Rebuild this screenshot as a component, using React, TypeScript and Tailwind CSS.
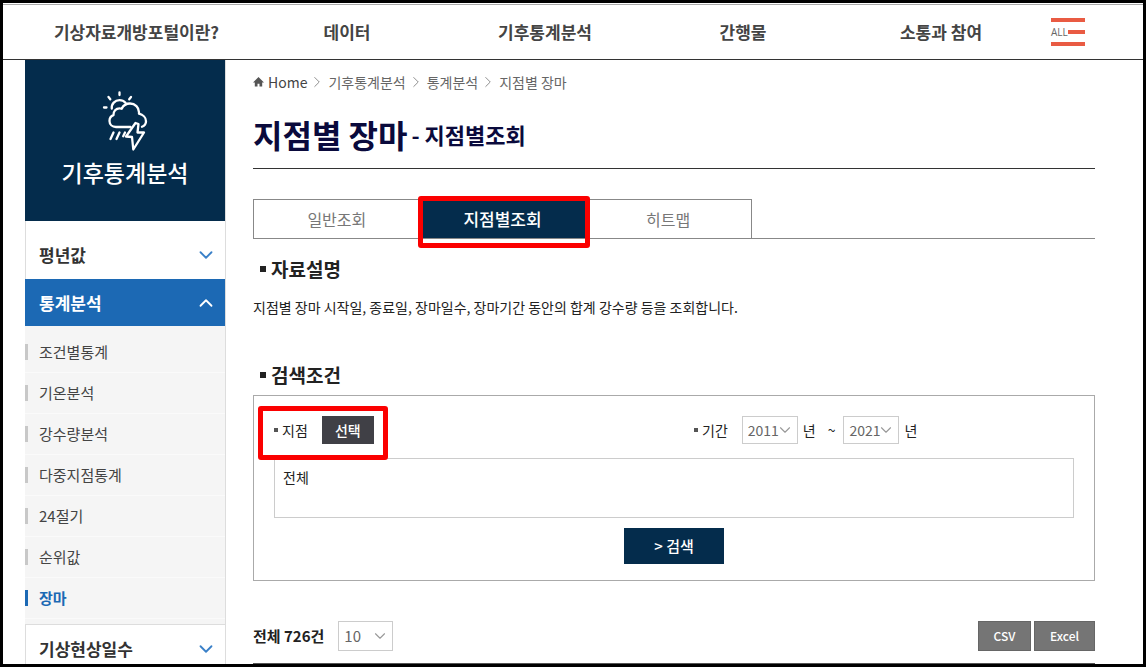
import React, { useState } from 'react';
import { ChevronDown, ChevronRight, ChevronUp } from 'lucide-react';

const NAV_ITEMS = ['기상자료개방포털이란?', '데이터', '기후통계분석', '간행물', '소통과 참여'];
const SUB_ITEMS = ['조건별통계', '기온분석', '강수량분석', '다중지점통계', '24절기', '순위값', '장마'];
const CRUMBS = ['기후통계분석', '통계분석', '지점별 장마'];
const TABS = ['일반조회', '지점별조회', '히트맵'];

const WeatherIcon: React.FC = () => (
  <svg width="46" height="61" viewBox="0 0 46 61" fill="none" stroke="white" strokeWidth="2.3" strokeLinecap="round" strokeLinejoin="round">
    <path d="M17.500 1.500v2.500M6.500 6l1.800 2.300M29 6l-1.800 2.300M2 16.500h2.500" />
    <path d="M9.800 17.500c-.6-4.500 3.200-8.300 7.700-8.300 2.500 0 4.600 1 6 2.600" />
    <path d="M28.500 36H14c-3.800 0-6.500-2.600-6.500-6 0-2.800 1.500-5 4-5.800-.3-4.200 2.600-6.900 6-6.900.8 0 1.500.1 2.200.4 1.500-3.200 4.700-5.200 8.300-5.200 5.200 0 9 4 9 8.800v1.400c4 .9 7 3.900 7 7.500 0 2.600-1.600 4.600-4 5.600" />
    <path d="M33.500 32L24 45.500l6 .5 1.300 12.500L42 41.500h-6.500L36.500 33z" />
    <path d="M11.500 41.500l-3 6.500M17.500 41.500l-3 6.500M23 41.500l-1.800 3.800" />
  </svg>
);

const HomeIcon: React.FC = () => (
  <svg width="11" height="10" viewBox="0 0 11 10" fill="#555">
    <path d="M5.500 0L0 5.500h1.800V9.500h2.700V6.800h2v2.700h2.700V5.500H11z" />
  </svg>
);

type SelectProps = React.SelectHTMLAttributes<HTMLSelectElement> & { options: string[] };

const SelectBox: React.FC<SelectProps> = ({ options, className = '', ...rest }) => (
  <div className="relative">
    <select {...rest} className={`block appearance-none border border-[#ccc] bg-white pl-[5px] text-[#666] ${className}`}>
      {options.map((o) => <option key={o} value={o}>{o}</option>)}
    </select>
    <ChevronDown size={18} strokeWidth={1.5} className="pointer-events-none absolute top-1/2 right-1 -translate-y-1/2 text-[#999]" />
  </div>
);

const SectionTitle: React.FC<{ children: React.ReactNode }> = ({ children }) => (
  <h3 className="flex items-center gap-[5px] pl-[7px] text-[19px] leading-7 font-bold text-[#222]">
    <span className="h-1.5 w-1.5 bg-[#222]" />
    {children}
  </h3>
);

const App: React.FC = () => {
  const [tab, setTab] = useState('지점별조회');
  const [stations, setStations] = useState('전체');

  return (
    <div className="h-screen overflow-hidden border-[3px] border-black bg-white pt-px font-['Noto_Sans_CJK_KR',sans-serif] text-[#222]">
      <header className="border-t border-b border-t-[#aaa] border-b-[#333] pr-12 pl-[22px]">
        <nav className="flex h-[54px] items-center">
          <ul className="grid flex-1 grid-cols-[223px_repeat(4,1fr)] text-center text-[17px] leading-6 font-bold text-[#444]">
            {NAV_ITEMS.map((item) => (
              <li key={item}><a href="#">{item}</a></li>
            ))}
          </ul>
          <button aria-label="전체메뉴" className="ml-[11px] flex h-7 w-[44px] flex-col justify-between pr-[10px]">
            <span className="h-1 w-full bg-[#e95b43]" />
            <span className="flex h-1 w-full items-center justify-between">
              <span className="font-['Open_Sans',sans-serif] text-[10px] leading-none text-[#666]">ALL</span>
              <span className="h-1 w-[17px] bg-[#e95b43]" />
            </span>
            <span className="h-1 w-full bg-[#e95b43]" />
          </button>
        </nav>
      </header>

      <div className="flex items-start gap-[27px] pr-12 pl-[22px]">
        <aside className="w-[201px] shrink-0 border-r border-[#ddd]">
          <div className="flex h-[161px] flex-col items-center bg-[#042c4c] pt-[31px] text-white">
            <WeatherIcon />
            <h2 className="mt-1 text-[23px] leading-8 font-medium">기후통계분석</h2>
          </div>
          <a href="#" className="flex h-[58px] items-center justify-between border-l border-[#ddd] pt-[10px] pr-2 pl-[13px] text-[17px] font-bold text-[#333]">
            평년값
            <ChevronDown size={22} strokeWidth={2} className="text-[#3a80c8]" />
          </a>
          <a href="#" className="flex h-[47px] items-center justify-between bg-[#1c69b4] pr-2 pl-[14px] text-[17px] font-bold text-white">
            통계분석
            <ChevronUp size={22} strokeWidth={2} />
          </a>
          <ul className="border-b border-[#ddd] bg-[#f5f5f5] pt-1.5 pb-[5px]">
            {SUB_ITEMS.map((item) => (
              <li key={item} className="flex h-[41px] items-center border-b border-[#fafafa]">
                <span className={`h-4 w-[3px] ${item === '장마' ? 'bg-[#1c69b4]' : 'bg-[#c8c8c8]'}`} />
                <a href="#" className={`pl-[11px] text-[15px] ${item === '장마' ? 'font-bold text-[#1c69b4]' : 'text-[#444]'}`}>{item}</a>
              </li>
            ))}
          </ul>
          <a href="#" className="flex h-12 items-center justify-between border-l border-[#ddd] pr-2 pl-[13px] text-[17px] font-bold text-[#333]">
            기상현상일수
            <ChevronDown size={22} strokeWidth={2} className="text-[#3a80c8]" />
          </a>
        </aside>

        <main className="min-w-0 flex-1">
          <div className="flex h-11 items-center text-[14px] text-[#666]">
            <HomeIcon />
            <a href="#" className="ml-1 text-[#444]">Home</a>
            {CRUMBS.map((c) => (
              <React.Fragment key={c}>
                <ChevronRight size={18} strokeWidth={1.25} className="mr-0.5 ml-px text-[#888]" />
                <a href="#">{c}</a>
              </React.Fragment>
            ))}
          </div>

          <div className="flex h-[65px] items-center border-b border-[#333] pb-1 text-[#0a0a3c]">
            <h1 className="flex items-center text-[32px] leading-[56px] font-bold">
              지점별 장마
              <small className="ml-1 text-[22px] font-bold">- 지점별조회</small>
            </h1>
          </div>

          <div className="mt-[30px] flex border-b border-[#888]">
            <div role="tablist" className="grid w-[499px] grid-cols-3 border-x border-t border-[#888]">
              {TABS.map((t) => (
                <div key={t} className="relative">
                  <button
                    role="tab"
                    aria-selected={t === tab}
                    onClick={() => setTab(t)}
                    className={`h-[38px] w-full ${t === tab ? 'bg-[#042c4c] text-[17px] font-medium text-white' : 'text-[16px] text-[#777]'}`}
                  >
                    {t}
                  </button>
                  {t === '지점별조회' && (
                    <span className="pointer-events-none absolute -top-1 -left-0.5 h-[52px] w-[172px] rounded-[3px] border-[5px] border-[#fb0000]" />
                  )}
                </div>
              ))}
            </div>
          </div>

          <section className="mt-4">
            <SectionTitle>자료설명</SectionTitle>
            <p className="mt-3 text-[14px] leading-6 text-[#222]">
              지점별 장마 시작일, 종료일, 장마일수, 장마기간 동안의 합계 강수량 등을 조회합니다.
            </p>
          </section>

          <section className="mt-[42px]">
            <SectionTitle>검색조건</SectionTitle>
            <form onSubmit={(e) => e.preventDefault()} className="mt-1.5 border border-[#aaa] px-5 pt-5 pb-4 text-[14px]">
              <div className="grid grid-cols-2">
                <div className="relative flex items-center">
                  <span className="mr-1 h-1 w-1 bg-[#555]" />
                  <label htmlFor="stations">지점</label>
                  <button type="button" className="ml-3.5 h-7 w-[52px] bg-[#404046] font-medium text-white">선택</button>
                  <span className="pointer-events-none absolute -top-[10px] -left-4 h-[54px] w-[130px] rounded-[3px] border-[5px] border-[#fb0000]" />
                </div>
                <div className="flex items-center pl-5">
                  <span className="mr-1 h-1 w-1 bg-[#555]" />
                  <label htmlFor="startYear" className="mr-3.5">기간</label>
                  <SelectBox id="startYear" options={['2011', '2012', '2013']} defaultValue="2011" className="h-7 w-14" />
                  <label htmlFor="startYear" className="mr-3 ml-[5px]">년</label>
                  <span className="mr-2">~</span>
                  <SelectBox id="endYear" options={['2019', '2020', '2021']} defaultValue="2021" className="h-7 w-14" />
                  <label htmlFor="endYear" className="ml-[5px]">년</label>
                </div>
              </div>
              <textarea
                id="stations"
                value={stations}
                onChange={(e) => setStations(e.target.value)}
                className="mt-3.5 block h-[60px] w-full resize-none border border-[#ccc] px-2 py-1.5 leading-6 outline-none"
              />
              <button type="submit" className="mx-auto mt-[10px] block h-9 w-[100px] bg-[#042c4c] text-[15px] font-medium text-white">
                &gt; 검색
              </button>
            </form>
          </section>

          <div className="mt-10 flex items-center border-b border-[#555] pb-3">
            <label htmlFor="pageSize" className="mr-3.5 text-[15px] font-bold">전체 726건</label>
            <SelectBox id="pageSize" options={['10', '20', '50']} defaultValue="10" className="h-[30px] w-[55px] text-[15px]" />
            <div className="ml-auto flex gap-[3px] text-[12px] font-medium text-white">
              <button className="h-[30px] w-[53px] border border-[#666] bg-[#757575]">CSV</button>
              <button className="h-[30px] w-[61px] border border-[#666] bg-[#757575]">Excel</button>
            </div>
          </div>
        </main>
      </div>
    </div>
  );
};

export default App;
